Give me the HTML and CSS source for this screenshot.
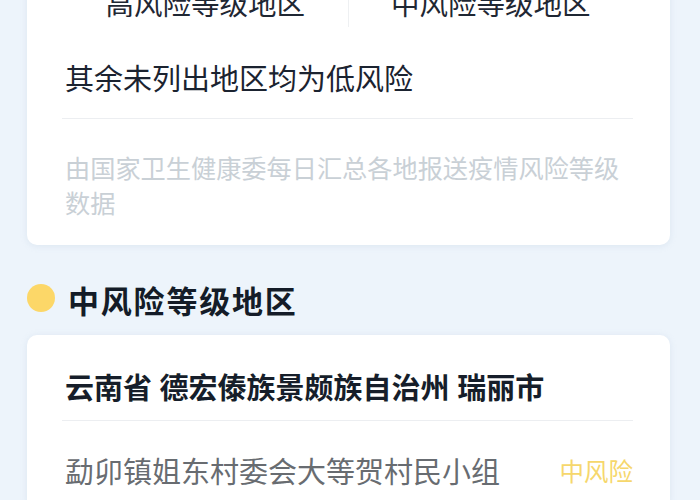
FILE: index.html
```html
<!DOCTYPE html>
<html lang="zh-CN">
<head>
<meta charset="utf-8">
<link rel="stylesheet" href="styles.css">
</head>
<body>
<div class="page">
  <div class="card card-summary">
    <div class="levels">
      <div class="level">高风险等级地区</div>
      <div class="level level-right">中风险等级地区</div>
    </div>
    <div class="rest">其余未列出地区均为低风险</div>
    <div class="note">由国家卫生健康委每日汇总各地报送疫情风险等级数据</div>
  </div>

  <div class="section-title">
    <span class="dot"></span>
    <span class="title-text">中风险等级地区</span>
  </div>

  <div class="card card-list">
    <div class="region">云南省 德宏傣族景颇族自治州 瑞丽市</div>
    <div class="place-row">
      <span class="place">勐卯镇姐东村委会大等贺村民小组</span>
      <span class="tag">中风险</span>
    </div>
  </div>
</div>
</body>
</html>
```
FILE: styles.css
```css
html, body {
  margin: 0;
  padding: 0;
  height: 100%;
  overflow: hidden;
}
body {
  background: #edf4fb;
  font-family: "Noto Sans CJK SC", "Noto Sans", sans-serif;
  color: #1b2330;
}
.page {
  padding: 0 30px 0 27px;
}
.card {
  background: #ffffff;
  border-radius: 10px;
  box-shadow: 0 1px 6px rgba(170, 190, 215, 0.25);
  padding: 0 37px 0 38px;
}
.card-summary {
  margin-top: -40px;
  padding-top: 23px;
  padding-bottom: 25px;
}
.levels {
  display: flex;
  height: 41px;
  margin-left: -2px;
}
.level {
  flex: 1;
  text-align: center;
  font-size: 28.5px;
  line-height: 40px;
  color: #1f2733;
}
.level-right {
  border-left: 1px solid #eef0f2;
  height: 44px;
}
.rest {
  margin-top: 33px;
  margin-left: -3px;
  padding-left: 3px;
  font-size: 29px;
  line-height: 40px;
  color: #1b2330;
  padding-bottom: 21px;
  border-bottom: 1px solid #eceef1;
}
.note {
  margin-top: 31px;
  font-size: 25.2px;
  line-height: 35px;
  color: #c9d0d6;
  margin-right: -4px;
}
.section-title {
  display: flex;
  align-items: center;
  margin-top: 35px;
  height: 40px;
}
.dot {
  width: 28px;
  height: 28px;
  border-radius: 50%;
  background: #fcd768;
  margin-top: -5px;
}
.title-text {
  margin-left: 13px;
  font-size: 31px;
  font-weight: 700;
  letter-spacing: 1.8px;
  line-height: 40px;
  color: #141c28;
}
.card-list {
  margin-top: 15px;
  padding-top: 31px;
  padding-bottom: 20px;
}
.region {
  margin-left: -3px;
  padding-left: 3px;
  font-size: 29px;
  font-weight: 700;
  word-spacing: 1px;
  line-height: 40px;
  color: #161e2a;
  padding-bottom: 14px;
  border-bottom: 1px solid #eceef1;
}
.place-row {
  display: flex;
  justify-content: space-between;
  align-items: center;
  margin-top: 29px;
  height: 40px;
}
.place {
  font-size: 29px;
  color: #686c71;
}
.tag {
  font-size: 24.5px;
  color: #f6d76c;
}
```
